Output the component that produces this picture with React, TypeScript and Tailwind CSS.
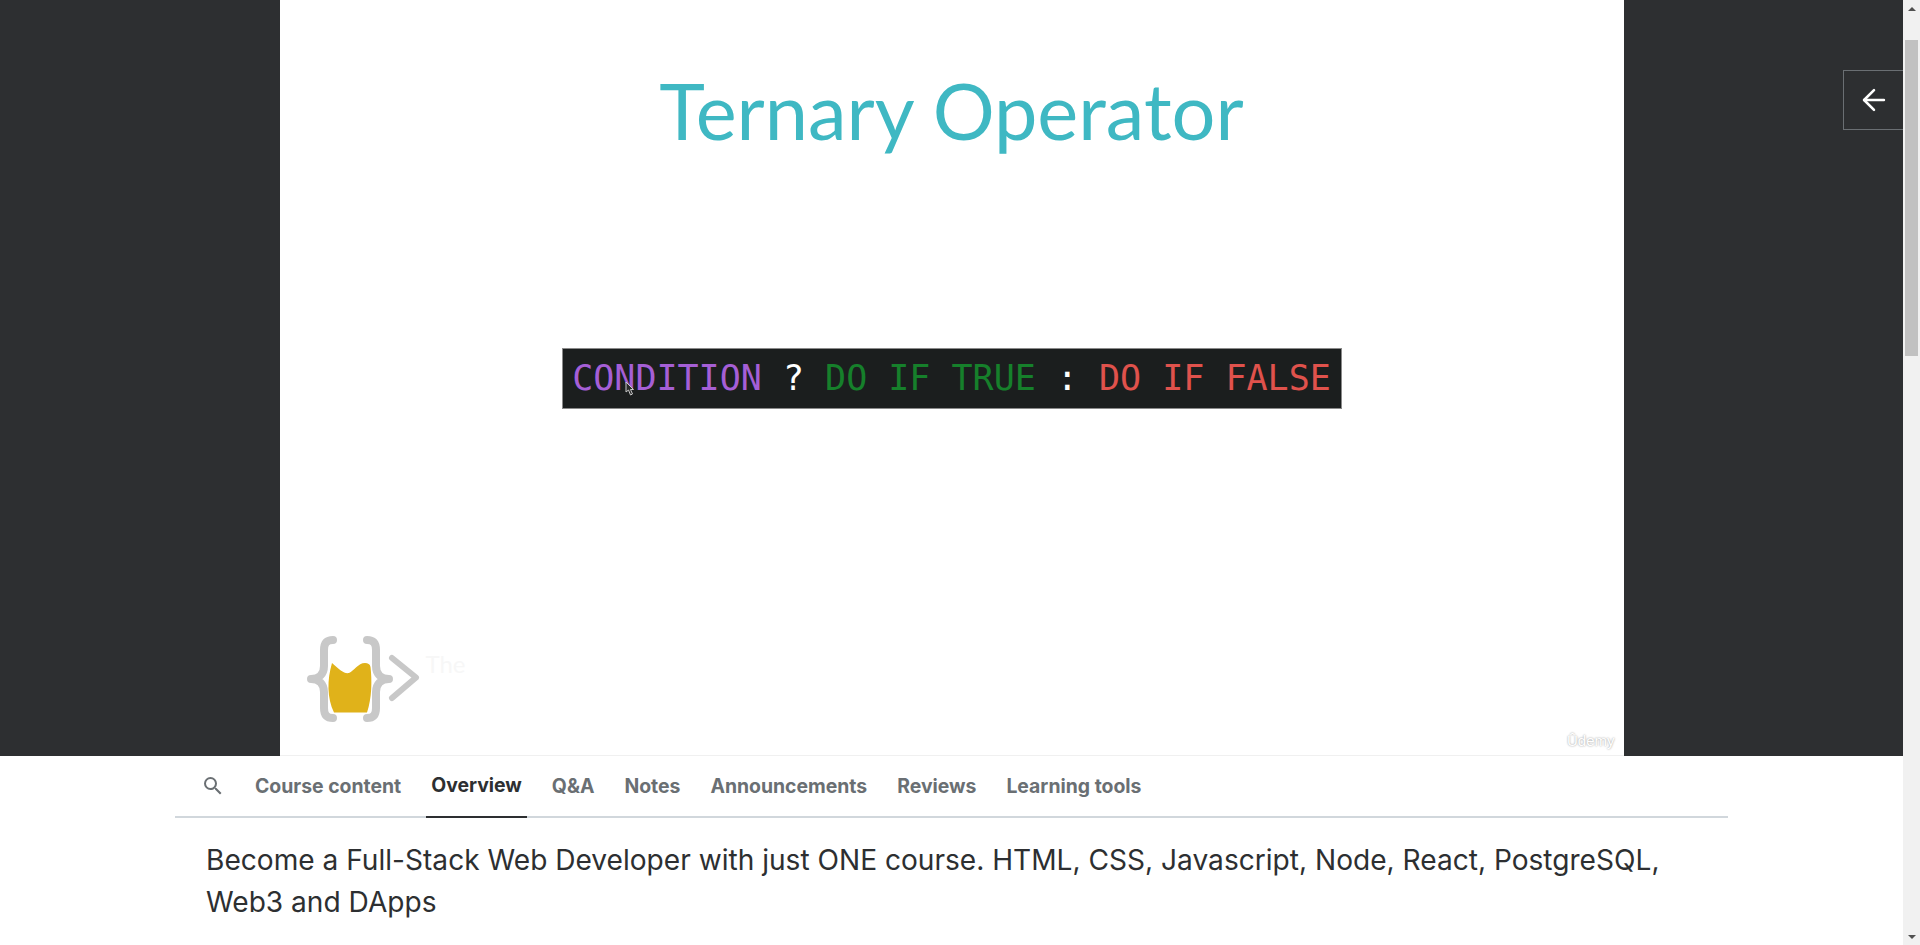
import { ArrowLeft } from "lucide-react"

const tabs = ["Course content", "Overview", "Q&A", "Notes", "Announcements", "Reviews", "Learning tools"]

function Logo() {
  return (
    <svg className="absolute left-0 top-[620px]" width="240" height="130" viewBox="0 0 240 130" fill="none">
      <path
        d="M52 43C60 50 64 54 69 53C74 51 78 43 85 43C88 43 90 44 90.500 47C92 60 92 78 87 92.500L54 92.500C47 78 47 60 52 43Z"
        fill="#e0b21a"
      />
      <path
        d="M53 20C46 20 44 24 44 30V46C44 54 39 59 31 59C39 59 44 64 44 72V88C44 94 46 98 53 98"
        stroke="#c8c8c8"
        strokeWidth="8"
        strokeLinecap="round"
        strokeLinejoin="round"
      />
      <path
        d="M87 20C94 20 96 24 96 30V46C96 54 101 59 109 59C101 59 96 64 96 72V88C96 94 94 98 87 98"
        stroke="#c8c8c8"
        strokeWidth="8"
        strokeLinecap="round"
        strokeLinejoin="round"
      />
      <path d="M112 38L136 57.500L112 78" stroke="#c8c8c8" strokeWidth="6" strokeLinecap="round" strokeLinejoin="round" />
    </svg>
  )
}

function SearchIcon() {
  return (
    <svg width="24" height="24" viewBox="0 0 24 24" fill="currentColor">
      <path d="M15.500 14h-.79l-.28-.27A6.470 6.470 0 0 0 16 9.500 6.500 6.500 0 1 0 9.500 16c1.610 0 3.090-.59 4.230-1.570l.27.28v.79l5 4.990L20.490 19l-4.990-5zm-6 0C7.010 14 5 11.990 5 9.500S7.010 5 9.500 5 14 7.010 14 9.500 11.990 14 9.500 14z" />
    </svg>
  )
}

function Scrollbar() {
  return (
    <div className="flex h-full w-[17px] shrink-0 flex-col items-center bg-[#f1f1f1]">
      <div className="flex h-[17px] w-full items-center justify-center">
        <div className="h-0 w-0 border-x-[4px] border-b-[4px] border-x-transparent border-b-[#505050]" />
      </div>
      <div className="mt-[23px] h-[316px] w-[13px] bg-[#c1c1c1]" />
      <div className="mt-auto flex h-[17px] w-full items-center justify-center">
        <div className="h-0 w-0 border-x-[4px] border-t-[4px] border-x-transparent border-t-[#505050]" />
      </div>
    </div>
  )
}

export default function App() {
  return (
    <div className="flex h-[945px] w-full overflow-hidden bg-white font-['Inter',sans-serif] text-[#2d2f31]">
      <div className="min-w-0 flex-1">
        <div className="relative flex h-[756px] justify-center bg-[#2d2f31]">
          <div className="relative flex h-full w-[1344px] flex-col items-center border-b border-[#f0f0f0] bg-white">
            <h1 className="mt-[61px] font-['Lato',sans-serif] text-[77.500px] leading-[100px] font-normal text-[#3fb8c3]">
              Ternary Operator
            </h1>
            <div className="relative mt-[187px] flex h-[61px] w-[780px] items-center justify-center border border-[#8a8a8a] bg-[#1b1e1e] font-['DejaVu_Sans_Mono',monospace] text-[35px] whitespace-pre">
              <span className="text-[#a55fd6]">CONDITION</span>
              <span className="text-white"> ? </span>
              <span className="text-[#16802b]">DO IF TRUE</span>
              <span className="text-white"> : </span>
              <span className="text-[#e0524c]">DO IF FALSE</span>
              {/* mouse pointer caught in the video frame */}
              <svg className="absolute left-[62px] top-[32px]" width="10" height="15" viewBox="0 0 10 15">
                <path d="M1 1V11L3.500 9L5.500 14L7.500 13L5.500 8.500H8.500Z" fill="#2b2b2b" stroke="#c9c9c9" strokeWidth="1" />
              </svg>
            </div>
            <Logo />
            <span className="absolute left-[146px] top-[646px] font-['Lato',sans-serif] text-[24px] text-[#f7f7f7]">The</span>
            <span className="absolute bottom-[4px] right-[9px] font-['Liberation_Sans',sans-serif] text-[15px] leading-[20px] text-white [text-shadow:0_0_2px_#8a8a8a]">
              Ûdemy
            </span>
          </div>
          <button className="absolute right-0 top-[70px] flex h-[60px] w-[60px] items-center justify-center border border-r-0 border-[#6a6f73] bg-[#2d2f31] text-white">
            <ArrowLeft size={34} strokeWidth={1.8} />
          </button>
        </div>
        <div className="mx-auto w-[1553px]">
          <nav className="flex h-[62px] items-stretch border-b-2 border-[#d1d7dc] pl-[26px]">
            <div className="flex w-[49px] items-center text-[#6a6f73]">
              <SearchIcon />
            </div>
            <div className="flex gap-[20px]">
              {tabs.map((tab) => (
                <div
                  key={tab}
                  className={
                    tab === "Overview"
                      ? "-mb-[2px] flex items-center border-b-2 border-[#2d2f31] px-[5px] text-[19.400px] font-bold text-[#2d2f31]"
                      : "-mb-[2px] flex items-center px-[5px] text-[19.400px] font-bold text-[#6a6f73]"
                  }
                >
                  {tab}
                </div>
              ))}
            </div>
          </nav>
          <p className="mt-[21px] pl-[31px] pr-[40px] text-[28.100px] leading-[42px]">
            Become a Full-Stack Web Developer with just ONE course. HTML, CSS, Javascript, Node, React, PostgreSQL, Web3 and DApps
          </p>
        </div>
      </div>
      <Scrollbar />
    </div>
  )
}
